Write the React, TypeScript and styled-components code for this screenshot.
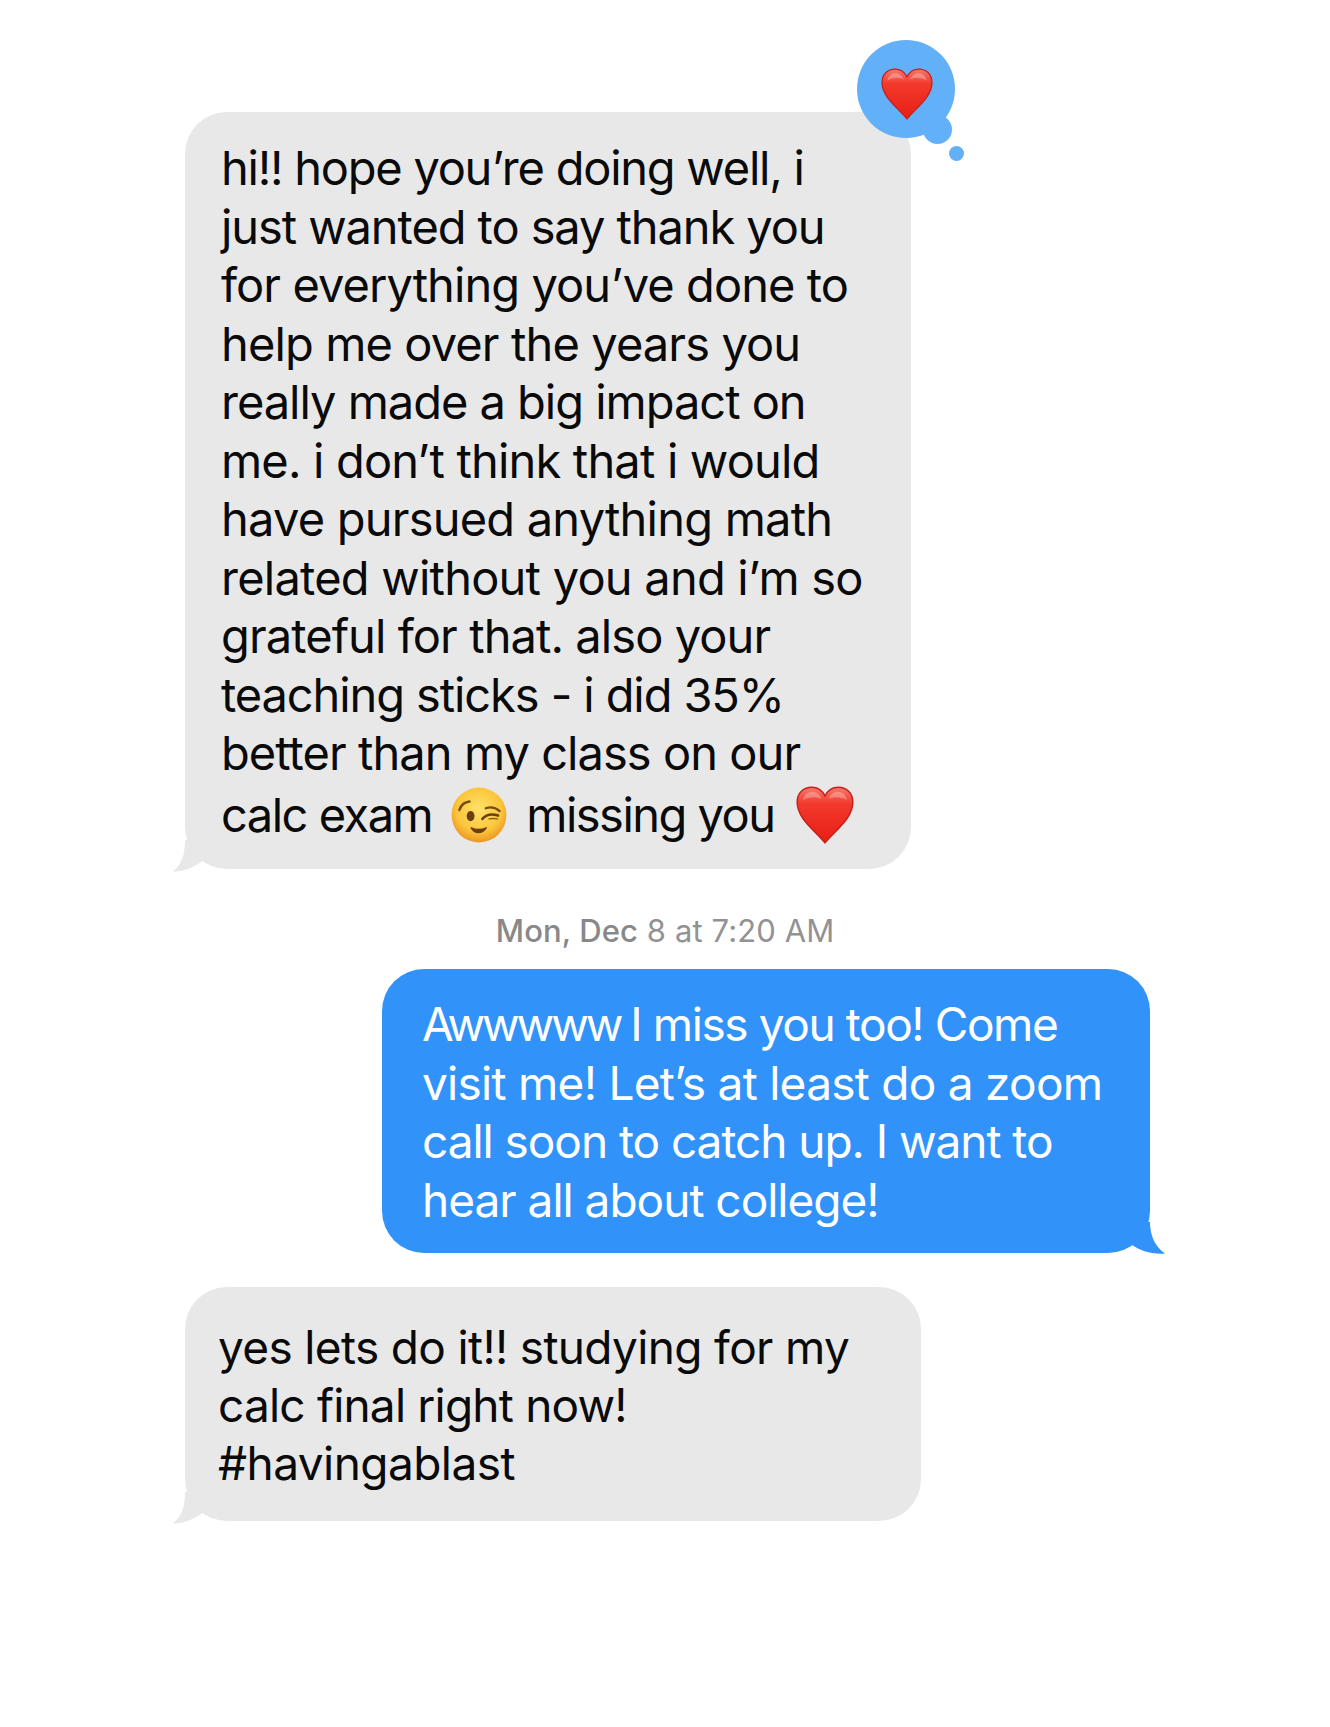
import React from "react";
import styled, { createGlobalStyle } from "styled-components";

const Global = createGlobalStyle`
  html, body { margin: 0; padding: 0; background: #fff; }
  body { font-family: Inter, "Liberation Sans", sans-serif; }
`;

const Page = styled.main`
  width: 1330px;
  height: 1727px;
  box-sizing: border-box;
  padding: 112px 0 0 185px;
  display: flex;
  flex-direction: column;
  align-items: flex-start;
  overflow: hidden;
`;

const Bubble = styled.div<{ $sent?: boolean; $w: number; $h: number; $pl: number }>`
  position: relative;
  box-sizing: border-box;
  width: ${(p) => p.$w}px;
  height: ${(p) => p.$h}px;
  padding-left: ${(p) => p.$pl}px;
  border-radius: 42px;
  background: ${(p) => (p.$sent ? "#3193f9" : "#e8e8e8")};
  color: ${(p) => (p.$sent ? "#fff" : "#0a0a0a")};
`;

const Lines = styled.div<{ $top: number; $lh: number; $size: number }>`
  padding-top: ${(p) => p.$top}px;
  font-size: ${(p) => p.$size}px;
  line-height: ${(p) => p.$lh}px;
`;

const Line = styled.div<{ $ls: number }>`
  white-space: nowrap;
  display: flex;
  align-items: center;
  letter-spacing: ${(p) => p.$ls}px;
`;

const EmojiLine = styled(Line)`
  margin-top: 3px;
`;

const Tight = styled.span`
  letter-spacing: -3.1px;
  margin-right: 10px;
`;

const Stamp = styled.div`
  align-self: center;
  margin: 44px 185px 0 0;
  font-size: 31px;
  line-height: 36px;
  letter-spacing: 0.1px;
  color: #929294;
  strong { font-weight: 500; color: #88888a; }
`;

const Tail = styled.svg<{ $sent?: boolean }>`
  position: absolute;
  width: 36px;
  height: 32px;
  ${(p) => (p.$sent ? "right: -16px; bottom: -1px;" : "left: -12px; bottom: -3px;")}
`;

const Tapback = styled.div`
  position: absolute;
  top: -72px;
  left: 672px;
  width: 98px;
  height: 98px;
  box-sizing: border-box;
  padding: 10px 0 0 1px;
  border-radius: 50%;
  background: #62b0f7;
  display: flex;
  align-items: center;
  justify-content: center;
  &::before {
    content: "";
    position: absolute;
    left: 66px;
    top: 75px;
    width: 29px;
    height: 29px;
    border-radius: 50%;
    background: #62b0f7;
  }
  &::after {
    content: "";
    position: absolute;
    left: 92px;
    top: 106px;
    width: 15px;
    height: 15px;
    border-radius: 50%;
    background: #62b0f7;
  }
`;

const EmojiWrap = styled.svg<{ $size: number; $gap?: number }>`
  width: ${(p) => p.$size}px;
  height: ${(p) => p.$size}px;
  margin-left: ${(p) => p.$gap ?? 0}px;
  flex: none;
  position: relative;
  z-index: 1;
`;

const Heart = ({ size, gap, id }: { size: number; gap?: number; id: string }) => (
  <EmojiWrap $size={size} $gap={gap} viewBox="0 0 100 100">
    <defs>
      <linearGradient id={id} x1="0" y1="0" x2="0" y2="1">
        <stop offset="0" stopColor="#f77a6e" />
        <stop offset="0.3" stopColor="#f2382c" />
        <stop offset="1" stopColor="#e81f14" />
      </linearGradient>
    </defs>
    <path
      d="M50 98C32 76 2 56 2 28C2 11 14 2 27 2C37 2 45 7 50 17C55 7 63 2 73 2C86 2 98 11 98 28C98 56 68 76 50 98Z"
      fill={`url(#${id})`}
      stroke="#c4211a"
      strokeWidth="2.5"
    />
    <path
      d="M12 24C14 14 22 9 30 10C36 11 41 15 44 22C36 18 22 18 12 24Z"
      fill="#fff"
      opacity="0.28"
    />
    <path
      d="M56 22C59 15 64 11 70 10C78 9 86 14 88 24C78 18 64 18 56 22Z"
      fill="#fff"
      opacity="0.28"
    />
  </EmojiWrap>
);

const Wink = () => (
  <EmojiWrap $size={56} $gap={19} viewBox="0 0 100 100">
    <defs>
      <radialGradient id="wink" cx="0.5" cy="0.4" r="0.62">
        <stop offset="0" stopColor="#fde26a" />
        <stop offset="0.65" stopColor="#fbc63c" />
        <stop offset="1" stopColor="#ec9020" />
      </radialGradient>
    </defs>
    <circle cx="50" cy="50" r="49" fill="url(#wink)" />
    <path d="M15 41C18 32 25 27 33 26" fill="none" stroke="#7a4a12" strokeWidth="4.5" strokeLinecap="round" />
    <ellipse cx="35" cy="52" rx="7" ry="9" fill="#6b3f10" />
    <path d="M62 38C70 35 80 37 87 43" fill="none" stroke="#7a4a12" strokeWidth="4" strokeLinecap="round" />
    <path d="M56 57C62 50 72 47 84 51" fill="none" stroke="#6b3f10" strokeWidth="4.5" strokeLinecap="round" />
    <path d="M68 57C73 56 78 56 83 57" fill="none" stroke="#8a5a1c" strokeWidth="2.5" strokeLinecap="round" />
    <path d="M36 73C42 84 56 84 63 73C54 77 45 77 36 73Z" fill="#6b3f10" stroke="#6b3f10" strokeWidth="2.5" strokeLinejoin="round" />
  </EmojiWrap>
);

const TailLeft = () => (
  <Tail viewBox="0 0 36 32">
    <path d="M12 0C12 14 9 24 0 31.5C10 32 22 27 32 19L32 0Z" fill="#e8e8e8" />
  </Tail>
);

const TailRight = () => (
  <Tail $sent viewBox="0 0 36 32">
    <path d="M20 0C20 12 24 24 35 31.5C22 32.5 10 29 1 22L1 0Z" fill="#3193f9" />
  </Tail>
);

const first: [string, number][] = [
  ["hi!! hope you’re doing well, i", -1.24],
  ["just wanted to say thank you", -1.08],
  ["for everything you’ve done to", -0.93],
  ["help me over the years you", -0.88],
  ["really made a big impact on", -1.02],
  ["me. i don’t think that i would", -0.82],
  ["have pursued anything math", -0.78],
  ["related without you and i’m so", -0.77],
  ["grateful for that. also your", -0.92],
  ["teaching sticks - i did 35%", -1.1],
  ["better than my class on our", -0.94],
];

const second: [string, number][] = [
  ["visit me! Let’s at least do a zoom", -0.73],
  ["call soon to catch up. I want to", -1.04],
  ["hear all about college!", -1.0],
];

const third: [string, number][] = [
  ["yes lets do it!! studying for my", -0.66],
  ["calc final right now!", -0.8],
  ["#havingablast", -0.56],
];

const Emphasis = styled.span`
  margin-left: 19px;
`;

const SentBubbleRow = styled.div`
  margin: 20px 0 0 197px;
`;

const ThirdRow = styled.div`
  margin-top: 34px;
`;

export default function App() {
  return (
    <>
      <Global />
      <Page>
        <Bubble $w={726} $h={757} $pl={36}>
          <Tapback>
            <Heart size={52} id="h1" />
          </Tapback>
          <Lines $top={27} $lh={58.5} $size={47}>
            {first.map(([t, ls]) => (
              <Line key={t} $ls={ls}>
                {t}
              </Line>
            ))}
            <EmojiLine $ls={-1.5}>
              calc exam
              <Wink />
              <Emphasis>missing you</Emphasis>
              <Heart size={58} gap={21} id="h2" />
            </EmojiLine>
          </Lines>
          <TailLeft />
        </Bubble>
        <Stamp>
          <strong>Mon, Dec</strong> 8 at 7:20 AM
        </Stamp>
        <SentBubbleRow>
          <Bubble $sent $w={768} $h={284} $pl={40}>
            <Lines $top={26} $lh={58.6} $size={46}>
              <Line $ls={-1.4}>
                <Tight>Awwwww</Tight>I miss you too! Come
              </Line>
              {second.map(([t, ls]) => (
                <Line key={t} $ls={ls}>
                  {t}
                </Line>
              ))}
            </Lines>
            <TailRight />
          </Bubble>
        </SentBubbleRow>
        <ThirdRow>
          <Bubble $w={736} $h={234} $pl={33}>
            <Lines $top={32} $lh={57.8} $size={46}>
              {third.map(([t, ls]) => (
                <Line key={t} $ls={ls}>
                  {t}
                </Line>
              ))}
            </Lines>
            <TailLeft />
          </Bubble>
        </ThirdRow>
      </Page>
    </>
  );
}
